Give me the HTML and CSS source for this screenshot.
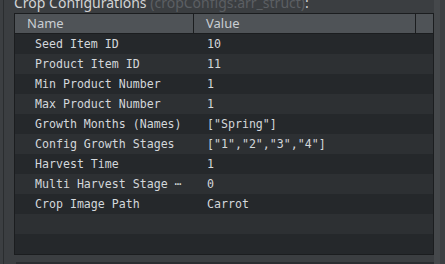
FILE: index.html
```html
<!DOCTYPE html>
<html>
<head>
<meta charset="utf-8">
<link rel="stylesheet" href="styles.css">
</head>
<body>
<div class="frame">
  <div class="panel">
    <div class="title">Crop Configurations <span class="dim">(cropConfigs:arr_struct)</span>:</div>
    <div class="table">
      <div class="head">
        <div class="hcell name">Name</div>
        <div class="hcell value">Value</div>
        <div class="hcell filler"></div>
      </div>
      <div class="row"><div class="k">Seed Item ID</div><div class="v">10</div></div>
      <div class="row"><div class="k">Product Item ID</div><div class="v">11</div></div>
      <div class="row"><div class="k">Min Product Number</div><div class="v">1</div></div>
      <div class="row"><div class="k">Max Product Number</div><div class="v">1</div></div>
      <div class="row"><div class="k">Growth Months (Names)</div><div class="v">["Spring"]</div></div>
      <div class="row"><div class="k">Config Growth Stages</div><div class="v">["1","2","3","4"]</div></div>
      <div class="row"><div class="k">Harvest Time</div><div class="v">1</div></div>
      <div class="row"><div class="k">Multi Harvest Stage ⋯</div><div class="v">0</div></div>
      <div class="row"><div class="k">Crop Image Path</div><div class="v">Carrot</div></div>
      <div class="row"><div class="k"></div><div class="v"></div></div>
      <div class="row"><div class="k"></div><div class="v"></div></div>
    </div>
    <div class="next"></div>
  </div>
  <div class="side"><div class="strip"></div></div>
</div>
</body>
</html>
```

FILE: styles.css
```css
html, body {
  margin: 0;
  padding: 0;
  background: #3c3f42;
  width: 445px;
  height: 264px;
  overflow: hidden;
}
.frame {
  display: flex;
  height: 264px;
  padding-left: 3px;
  box-sizing: border-box;
}
.panel {
  border-left: 1px solid #2a2d2f;
  padding-left: 10px;
  width: 420px;
  flex: none;
  background: #3b3e41;
}
.title {
  height: 13px;
  line-height: 13px;
  margin-top: -4px;
  padding-bottom: 4px;
  font-family: "Noto Sans", "DejaVu Sans", sans-serif;
  font-size: 14px;
  color: #d2d3d4;
  white-space: nowrap;
  overflow: visible;
}
.dim { color: #5b5f63; }
.table {
  border: 1px solid #1b1d1f;
  width: 418px;
  background: #25282b;
}
.head {
  display: grid;
  grid-template-columns: 179px 222px 17px;
  height: 19px;
  background: #4f5357;
  border-bottom: 1px solid #1b1d1f;
}
.hcell {
  font-family: "Noto Sans", "DejaVu Sans", sans-serif;
  font-size: 13px;
  line-height: 19px;
  color: #c9ced3;
  padding-left: 12px;
  box-sizing: border-box;
  border-right: 1px solid #1b1d1f;
}
.hcell.filler { border-right: none; padding: 0; }
.row {
  display: grid;
  grid-template-columns: 180px 238px;
  height: 20px;
  font-family: "DejaVu Sans Mono", monospace;
  font-size: 11.6px;
  line-height: 20px;
  color: #d3d7db;
  background: #25282b;
  white-space: nowrap;
}
.row:nth-child(odd) { background: #2d3033; }
.k { padding-left: 20px; overflow: hidden; }
.v { padding-left: 12px; }
.next {
  margin-top: 7px;
  margin-left: 2px;
  height: 3px;
  background: #2a2d30;
}
.side {
  flex: 1;
  display: flex;
}
.strip {
  width: 6px;
  background: #45484b;
}
```
